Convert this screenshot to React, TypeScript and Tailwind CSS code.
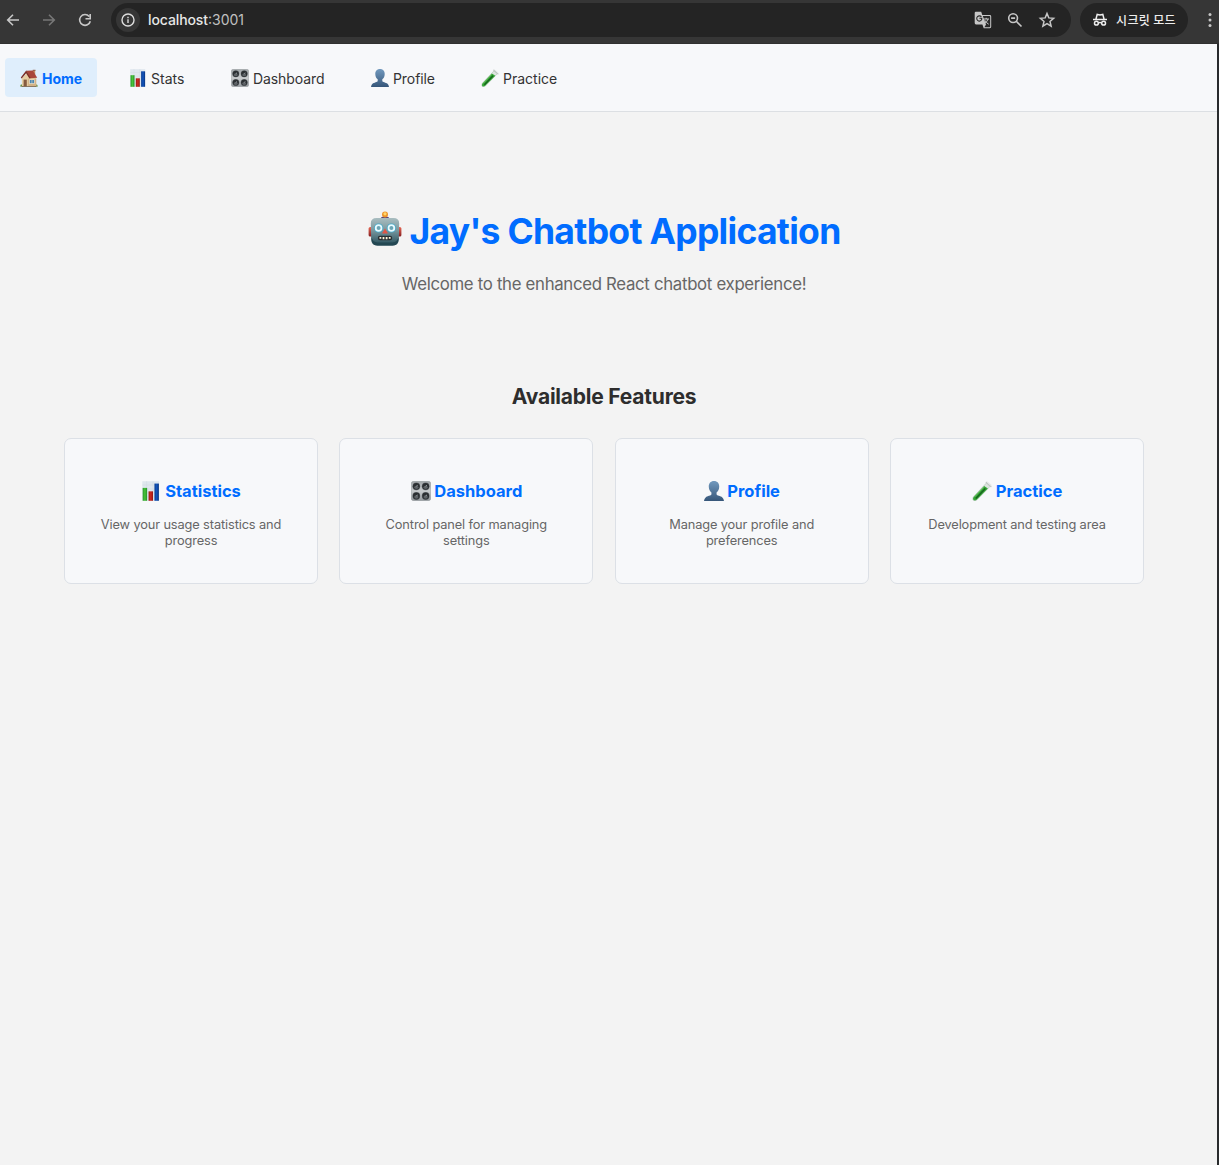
import type { ReactNode } from "react";

type IconProps = { className?: string };

function HouseIcon({ className }: IconProps) {
  return (
    <svg className={className} viewBox="0 0 18 18">
      <path d="M0 17.6 1 15.2 2.4 16 3.4 17.6ZM14.4 17.6 15.6 15.4 17 15.6 18 17.6Z" fill="#66913f" />
      <path d="M1.8 9.2 8.8 2.6 16.2 9.2V17.4H2Z" fill="#e6cda2" />
      <path d="M7.8 9.6H16.2V17.3H7.8Z" fill="#d3b286" />
      <path d="M13 1.2h2.2v5.4h-2.2z" fill="#c58a63" />
      <path d="M12.7 .8h2.8v1h-2.8z" fill="#8c5541" />
      <path d="M6.2 1.8 12.8 1.4 17.2 8.8 10 9.2Z" fill="#a8463a" />
      <path d="M6.2 1.4 .8 8.6 1.7 9.5 6.1 4.2 9.4 9.6 10.6 8.9Z" fill="#7c2e26" />
      <path d="M3.6 10.6h3.2v6.8H3.6z" fill="#855b40" />
      <path d="M9.2 10.4h5.4v4.4H9.2z" fill="#f8ecd2" />
      <path d="M9.8 11h1.9v3.2h-1.9zM12.2 11h1.9v3.2h-1.9z" fill="#4c86b1" />
      <path d="M1.5 17h15v.8h-15z" fill="#77624d" />
    </svg>
  );
}

function ChartIcon({ className }: IconProps) {
  return (
    <svg className={className} viewBox="0 0 18 18">
      <defs>
        <linearGradient id="chartGreen"><stop stopColor="#28982a" /><stop offset=".5" stopColor="#48c23b" /><stop offset="1" stopColor="#249025" /></linearGradient>
        <linearGradient id="chartRed"><stop stopColor="#9a1715" /><stop offset=".5" stopColor="#cf2b20" /><stop offset="1" stopColor="#941512" /></linearGradient>
        <linearGradient id="chartBlue"><stop stopColor="#0a3d92" /><stop offset=".5" stopColor="#1456bd" /><stop offset="1" stopColor="#08337f" /></linearGradient>
      </defs>
      <path d="M1.2 0.2h15v17.6h-15z" fill="#dfe7ee" />
      <path d="M1.2 3.6h15M1.2 7.2h15M1.2 10.8h15M1.2 14.4h15M5 .2v17.6M10.8 .2v17.6" stroke="#cfd9e2" strokeWidth=".4" />
      <path d="M1.5 6.2h4v11.6h-4z" fill="url(#chartGreen)" />
      <path d="M6.8 9.3h4v8.5h-4z" fill="url(#chartRed)" />
      <path d="M12.1 2.3h4v15.5h-4z" fill="url(#chartBlue)" />
    </svg>
  );
}

function Knob({ x, y }: { x: number; y: number }) {
  return (
    <g>
      <circle cx={x} cy={y} r="3.5" fill="#6f7478" />
      <circle cx={x} cy={y} r="3.1" fill="#2b2f32" />
      <ellipse cx={x} cy={y + 0.9} rx="1.9" ry="1.5" fill="#5d6266" />
      <path d={`M${x} ${y - 0.2}l1.2-.7`} stroke="#a3a8ab" strokeWidth=".8" />
    </g>
  );
}

function KnobsIcon({ className }: IconProps) {
  return (
    <svg className={className} viewBox="0 0 18 18">
      <defs><linearGradient id="panel" x1="0" y1="0" x2="0" y2="1"><stop stopColor="#a1a6a9" /><stop offset=".5" stopColor="#c8cbcd" /><stop offset="1" stopColor="#969b9f" /></linearGradient></defs>
      <rect x=".2" y=".2" width="17.6" height="17.6" rx="2.4" fill="url(#panel)" stroke="#858a8e" strokeWidth=".4" />
      <Knob x={4.8} y={4.8} /><Knob x={13.2} y={4.8} /><Knob x={4.8} y={13.5} /><Knob x={13.2} y={13.5} />
    </svg>
  );
}

function PersonIcon({ className }: IconProps) {
  return (
    <svg className={className} viewBox="0 0 18 18">
      <defs><linearGradient id="person" x1="0" y1="0" x2="0" y2="1"><stop stopColor="#7199be" /><stop offset="1" stopColor="#365679" /></linearGradient></defs>
      <path d="M9 0C5.9 0 4.2 2.1 4.3 5.2 4.4 7.8 5.4 9.3 6.7 10.3V12C6.5 13.3 3 13.4 1.5 14.8.7 15.5.2 16.6 0 18H18C17.8 16.6 17.3 15.5 16.5 14.8 15 13.4 11.5 13.3 11.3 12V10.3C12.6 9.3 13.6 7.8 13.7 5.2 13.8 2.1 12.1 0 9 0Z" fill="url(#person)" />
    </svg>
  );
}

function TubeIcon({ className }: IconProps) {
  return (
    <svg className={className} viewBox="0 0 18 18">
      <path d="M13 1.8 16.4 4.7 4.4 17C3 18.3 .9 18 .8 16.4.7 15.4 1 14.6 1.7 13.8Z" fill="#dde5df" stroke="#a9b8ae" strokeWidth=".5" />
      <path d="M10.9 4.4 14.3 6.7 4.2 16.8C3.1 17.9 1.1 17.7 1 16.3.9 15.3 1.2 14.6 1.9 13.9Z" fill="#35a635" />
      <path d="M12 6.7 3.4 15.7" stroke="#17651e" strokeWidth="1.4" />
      <path d="M10.4 5.6 2.3 14.3" stroke="#78c770" strokeWidth=".7" />
      <path d="M12.8 1.2 17 4.9" stroke="#c0c6c3" strokeWidth="1.2" strokeLinecap="round" />
      <path d="M13.8.9 17.2 3.8" stroke="#e6e9e8" strokeWidth="1" strokeLinecap="round" />
    </svg>
  );
}

function RobotIcon({ className }: IconProps) {
  return (
    <svg className={className} viewBox="0 0 34 36">
      <defs>
        <linearGradient id="robotHead" x1="0" y1="0" x2="0" y2="1"><stop stopColor="#a9bdc0" /><stop offset=".45" stopColor="#79989f" /><stop offset="1" stopColor="#244b57" /></linearGradient>
        <linearGradient id="ears" x1="0" y1="0" x2="0" y2="1"><stop stopColor="#e76855" /><stop offset="1" stopColor="#861e20" /></linearGradient>
      </defs>
      <path d="M12.7 7.4C12.7 5 21.3 5 21.3 7.4V9H12.7Z" fill="#594478" />
      <circle cx="17" cy="3.6" r="3" fill="#ed942b" />
      <circle cx="17" cy="2.8" r="1.6" fill="#ffd66a" />
      <rect x=".6" y="16" width="5" height="9.5" rx="1.5" fill="url(#ears)" />
      <rect x="28.4" y="16" width="5" height="9.5" rx="1.5" fill="url(#ears)" />
      <path d="M2.8 12.5Q2.8 7 8.5 7H25.5Q31.2 7 31.2 12.5L30.8 28Q30.8 34.5 24.5 34.5H9.5Q3.2 34.5 3.2 28Z" fill="url(#robotHead)" />
      <path d="M3.5 26Q4.5 31 9.5 31.5H24.5Q29.5 31 30.5 26V29Q29.8 34.5 24.5 34.5H9.5Q4.2 34.5 3.5 29Z" fill="#234752" />
      <circle cx="10.6" cy="17" r="4.6" fill="#42a9c9" /><circle cx="23.4" cy="17" r="4.6" fill="#42a9c9" />
      <circle cx="10.6" cy="17" r="3.8" fill="#e9fbff" /><circle cx="23.4" cy="17" r="3.8" fill="#e9fbff" />
      <circle cx="10.6" cy="17" r="2" fill="#6aa5b5" /><circle cx="23.4" cy="17" r="2" fill="#6aa5b5" />
      <path d="M17 17.6 20 22.6H14Z" fill="#e25545" />
      <rect x="9.8" y="24.7" width="14.4" height="4.6" rx="2.2" fill="#282f32" />
      <path d="M11.5 26h1.8v1.8h-1.8zM14.6 26h1.8v2.2h-1.8zM17.7 26h1.8v2.2h-1.8zM20.8 26h1.8v1.8h-1.8z" fill="#fff7dd" />
    </svg>
  );
}

function BrowserBar() {
  return (
    <header className="flex h-11 items-start border-b border-[#303030] bg-[#363636] text-[#c7c7c7]">
      <div className="flex h-10 w-[111px] shrink-0 items-center pl-[5px]">
        <svg className="h-4 w-4" viewBox="0 0 16 16" fill="none" stroke="currentColor" strokeWidth="1.6"><path d="M14 8H2.8M8 2.7 2.7 8 8 13.3" /></svg>
        <svg className="ml-5 h-4 w-4 text-[#777]" viewBox="0 0 16 16" fill="none" stroke="currentColor" strokeWidth="1.6"><path d="M2 8h11.2M8 2.7 13.3 8 8 13.3" /></svg>
        <svg className="ml-5 h-4 w-4" viewBox="0 0 16 16" fill="none" stroke="currentColor" strokeWidth="1.6"><path d="M13.3 9.2A5.4 5.4 0 1 1 12.2 4.5M13.2 2v4.7H8.5" /></svg>
      </div>
      <div className="mt-[3px] flex h-[34px] w-[960px] shrink-0 items-center rounded-full bg-[#242424] pl-[5px]">
        <div className="flex size-6 items-center justify-center rounded-full bg-[#363636]">
          <svg className="size-4" viewBox="0 0 16 16" fill="none" stroke="#dedede" strokeWidth="1.4"><circle cx="8" cy="8" r="6" /><path d="M8 7.3v3.8M8 4.7v1.5" /></svg>
        </div>
        <span className="mb-0.5 ml-2 text-[14px] text-[#e7e7e7]"><span className="font-medium tracking-[-0.1px]">localhost</span><span className="text-[#c0c0c0]">:3001</span></span>
        <div className="ml-auto flex items-center gap-[14px] pr-[15px]">
          <svg className="size-[18px]" viewBox="0 0 18 18">
            <path d="M1.8.8H7.2L8.3 4H15.8Q17.2 4 17.2 5.4V15.8Q17.2 17.2 15.8 17.2H9.7L8.4 13.4H2Q.7 13.4.7 12V2Q.7.8 1.8.8Z" fill="#c7c7c7" />
            <path d="M8.8 5H15.5Q16.2 5 16.2 5.7V15.5Q16.2 16.2 15.5 16.2H10.4L12 13.5Z" fill="#292929" />
            <path d="M7.4 5.9A2.6 2.6 0 1 0 7.7 8.6V7.3H5.4" fill="none" stroke="#292929" strokeWidth="1.1" />
            <path d="M9.4 8H15M12.2 6.8V8M14 8Q13.2 11 10.5 12.5M10.8 9.2Q12 11.8 14.7 13.2" fill="none" stroke="#c7c7c7" strokeWidth="1" />
          </svg>
          <svg className="size-[18px]" viewBox="0 0 18 18" fill="none" stroke="currentColor" strokeWidth="1.6"><circle cx="7.1" cy="7.1" r="4.4" /><path d="m10.3 10.3 5.2 5.2M5.1 7.1h4" /></svg>
          <svg className="size-[18px]" viewBox="0 0 18 18" fill="none" stroke="currentColor" strokeWidth="1.5"><path d="m9 2.5 1.8 4.4 4.8.4-3.6 3.1 1.1 4.7L9 12.6l-4.1 2.5L6 10.4 2.4 7.3l4.8-.4Z" /></svg>
        </div>
      </div>
      <div className="ml-[9px] mt-[3px] flex h-[34px] w-[108px] shrink-0 items-center rounded-full bg-[#242424] pl-3 text-[#ededed]">
        <svg className="size-4" viewBox="0 0 16 16" fill="none" stroke="currentColor" strokeWidth="1.5"><path d="M1 7.5h14M4 7 5.2 2.4 8 3l2.8-.6L12 7" /><circle cx="4.4" cy="11.2" r="1.9" /><circle cx="11.6" cy="11.2" r="1.9" /><path d="M6.4 10.8Q8 10 9.6 10.8" /></svg>
        <span className="ml-2 whitespace-nowrap font-['Noto_Sans_CJK_KR',sans-serif] text-[12px] font-medium tracking-[0.35px]">시크릿 모드</span>
      </div>
      <svg className="ml-[19px] mt-3 h-4 w-[6px]" viewBox="0 0 6 16" fill="currentColor"><circle cx="3" cy="2.5" r="1.5" /><circle cx="3" cy="8" r="1.5" /><circle cx="3" cy="13.5" r="1.5" /></svg>
    </header>
  );
}

function NavItem({ icon, label, className }: { icon: ReactNode; label: string; className: string }) {
  return <a href="#" className={`flex h-[39px] shrink-0 items-center rounded pl-[15px] pt-px text-[14px] ${className}`}>{icon}<span className="ml-1 whitespace-nowrap">{label}</span></a>;
}

function FeatureCard({ icon, title, children }: { icon: ReactNode; title: string; children: ReactNode }) {
  return (
    <article className="h-[146px] rounded-[7px] border border-[#dce0e6] bg-[#f7f8fa] pt-[42px] text-center">
      <h3 className="flex h-5 items-center justify-center text-[16.5px] font-bold text-[#006cff]">{icon}<span>{title}</span></h3>
      <p className="mt-4 text-[12.8px] leading-4 tracking-[-0.12px] text-[#666]">{children}</p>
    </article>
  );
}

export default function App() {
  return (
    <div className="h-[1165px] w-full overflow-hidden bg-[#f3f3f3] font-['Inter',sans-serif]">
      <BrowserBar />
      <div className="h-[1121px] border-r-2 border-[#292b2d]">
        <nav className="flex h-[68px] items-start border-b border-[#dcdfe3] bg-[#f7f8fa] pl-[5px] pt-[14px] text-[#333]">
          <NavItem className="w-[92px] bg-[#dfeefc] font-bold text-[#006cff]" label="Home" icon={<HouseIcon className="size-[18px]" />} />
          <NavItem className="ml-[17px] w-[85px]" label="Stats" icon={<ChartIcon className="size-[18px]" />} />
          <NavItem className="ml-[17px] w-[124px] tracking-[-0.08px]" label="Dashboard" icon={<KnobsIcon className="size-[18px]" />} />
          <NavItem className="ml-4 w-[94px] tracking-[-0.08px]" label="Profile" icon={<PersonIcon className="size-[18px]" />} />
          <NavItem className="ml-4 w-[106px]" label="Practice" icon={<TubeIcon className="size-[18px]" />} />
        </nav>
        <main>
          <section className="w-[1208px] pt-[98px] text-center">
            <h1 className="flex h-11 items-center justify-center text-[35.5px] font-bold text-[#006cff]">
              <RobotIcon className="ml-px mr-[7px] mt-[-6px] h-9 w-[34px]" /><span className="tracking-[-0.7px]">Jay's Chatbot Application</span>
            </h1>
            <p className="mt-[18px] text-[16.8px] leading-6 tracking-[-0.31px] text-[#666]">Welcome to the enhanced React chatbot experience!</p>
          </section>
          <section className="ml-16 mt-[86px] w-[1080px]">
            <h2 className="text-center text-[21px] font-bold leading-[30px] tracking-[-0.22px] text-[#2d2d2d]">Available Features</h2>
            <div className="mt-[26px] grid grid-cols-4 gap-x-[21.33px]">
              <FeatureCard title="Statistics" icon={<ChartIcon className="mr-1 size-5" />}>View your usage statistics and<br />progress</FeatureCard>
              <FeatureCard title="Dashboard" icon={<KnobsIcon className="ml-px mr-[3px] size-5" />}>Control panel for managing<br />settings</FeatureCard>
              <FeatureCard title="Profile" icon={<PersonIcon className="ml-px mr-[3px] size-5" />}>Manage your profile and<br />preferences</FeatureCard>
              <FeatureCard title="Practice" icon={<TubeIcon className="mr-1 size-5" />}>Development and testing area</FeatureCard>
            </div>
          </section>
        </main>
      </div>
    </div>
  );
}
